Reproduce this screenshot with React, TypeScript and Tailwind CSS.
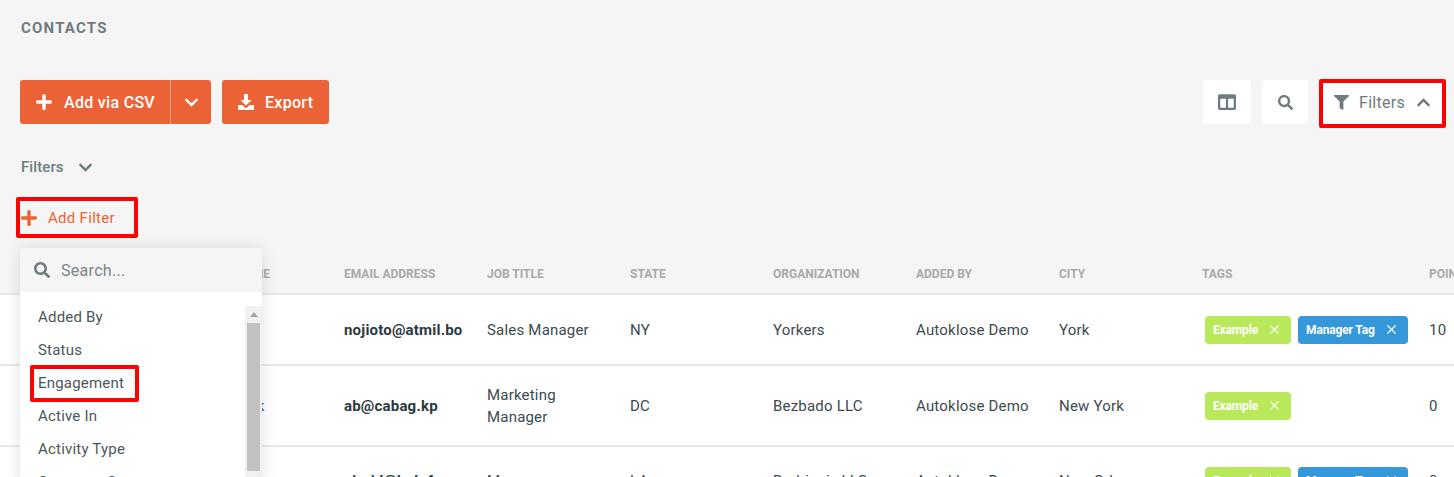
import { FaChevronDown, FaChevronUp, FaColumns, FaFilter, FaPlus, FaSearch } from "react-icons/fa";
import { X } from "lucide-react";

const columns = ["Email Address", "Job Title", "State", "Organization", "Added By", "City"];

const contacts = [
    {
        name: "Jo",
        email: "nojioto@atmil.bo",
        job: "Sales Manager",
        state: "NY",
        org: "Yorkers",
        city: "York",
        tags: ["Example", "Manager Tag"],
        points: "10",
        height: "h-[71px]",
    },
    {
        name: "Nick",
        email: "ab@cabag.kp",
        job: "Marketing Manager",
        state: "DC",
        org: "Bezbado LLC",
        city: "New York",
        tags: ["Example"],
        points: "0",
        height: "h-[81px]",
    },
    {
        name: "",
        email: "ajurid@hub.fm",
        job: "Manager",
        state: "LA",
        org: "Rodriguiz LLC",
        city: "New Orleans",
        tags: ["Example", "Manager Tag"],
        points: "0",
        height: "h-[69px]",
    },
];

const filterOptions = ["Added By", "Status", "Engagement", "Active In", "Activity Type", "Company Group"];

function Tag({ label }: { label: string }) {
    const color = label === "Example" ? "bg-[#b9e85b]" : "bg-[#3498db]";
    return (
        <span className={`flex h-[28px] items-center whitespace-nowrap rounded-[4px] pl-2 pr-[9px] text-[12px] font-bold tracking-[-0.15px] text-white ${color}`}>
            {label}
            <X size={15} strokeWidth={1.8} className="ml-[9px]" />
        </span>
    );
}

function Row({ contact }: { contact: (typeof contacts)[number] }) {
    return (
        <div className={`grid grid-cols-[234px_110px_143px_143px_143px_143px_143px_143px_227px_1fr] items-center border-b-2 border-[#e8e8e8] bg-white text-[15px] tracking-[0.2px] leading-[22px] text-[#3c4a50] ${contact.height}`}>
            <div />
            <div>{contact.name}</div>
            <div className="font-bold text-[#2c3a40]">{contact.email}</div>
            <div className="pr-6">{contact.job}</div>
            <div>{contact.state}</div>
            <div>{contact.org}</div>
            <div>Autoklose Demo</div>
            <div>{contact.city}</div>
            <div className="flex gap-[7px] pl-[3px]">
                {contact.tags.map((tag) => (
                    <Tag key={tag} label={tag} />
                ))}
            </div>
            <div>{contact.points}</div>
        </div>
    );
}

function FilterDropdown() {
    return (
        <div className="absolute left-[20px] top-[248px] h-[240px] w-[242px] overflow-hidden rounded-t-[4px] bg-white shadow-[0_0_16px_rgba(0,0,0,0.12)]">
            <div className="flex h-[44px] items-center bg-[#f5f5f5] pl-[14px]">
                <FaSearch size={16} className="text-[#6f7b7f]" />
                <span className="ml-[11px] pt-[2px] text-[16px] tracking-[0.3px] text-[#7b8589]">Search...</span>
            </div>
            <div className="flex">
                <div className="flex-1 pt-[9px] text-[15px] tracking-[0.2px] text-[#4a575c]">
                    {filterOptions.map((option) => (
                        <div key={option} className="relative flex h-[33px] items-center pl-[18px]">
                            {option}
                            {option === "Engagement" && (
                                <span className="absolute left-[10px] top-[-2px] h-[37px] w-[109px] rounded-[2px] border-4 border-[#ff0000]" />
                            )}
                        </div>
                    ))}
                </div>
                <div className="mt-[14px] flex h-[190px] w-[17px] flex-col items-center bg-[#f1f1f1]">
                    <svg width="8" height="5" viewBox="0 0 8 5" className="mt-[6px] mb-[6px] fill-[#a3a3a3]">
                        <path d="M4 0l4 5H0z" />
                    </svg>
                    <div className="h-[148px] w-[13px] bg-[#c1c1c1]" />
                </div>
            </div>
        </div>
    );
}

export default function App() {
    return (
        <div className="relative h-[477px] overflow-hidden bg-[#f5f5f5] font-['Roboto',sans-serif]">
            <div className="pl-[20px] pr-[8px] pt-[20px]">
                <h1 className="ml-px text-[15px] font-bold leading-4 tracking-[1.2px] text-[#6f7b7f]">CONTACTS</h1>

                <div className="mt-[44px] flex h-[44px] items-start">
                    <div className="flex h-[44px] rounded-[3px] bg-[#ea6235] text-[16px] font-medium tracking-[0.3px] text-white">
                        <button className="flex w-[151px] items-center border-r border-[#f4a185] pl-[15px]">
                            <FaPlus size={18} />
                            <span className="ml-[11px] pt-px">Add via CSV</span>
                        </button>
                        <button className="flex w-[40px] items-center justify-center">
                            <FaChevronDown size={15} />
                        </button>
                    </div>
                    <button className="ml-[11px] flex h-[44px] w-[107px] items-center rounded-[3px] bg-[#ea6235] pl-[16px] text-[16px] font-medium tracking-[0.3px] text-white">
                        <svg width="16" height="16" viewBox="0 0 16 16" className="fill-white">
                            <path d="M6 0h4v6h3.5L8 11.5 2.5 6H6z" />
                            <path d="M0 11h4.5l2.2 2.2a1.8 1.8 0 002.6 0L11.5 11H16v5H0z" />
                        </svg>
                        <span className="ml-[11px] pt-px">Export</span>
                    </button>

                    <button className="ml-auto flex h-[44px] w-[48px] items-center justify-center rounded-[3px] bg-white text-[#6f7b7f]">
                        <FaColumns size={18} />
                    </button>
                    <button className="ml-[11px] flex h-[44px] w-[46px] items-center justify-center rounded-[3px] bg-white text-[#6f7b7f]">
                        <FaSearch size={15} />
                    </button>
                    <button className="-mt-px ml-[11px] flex h-[49px] w-[127px] items-center rounded-[2px] border-4 border-[#ff0000] bg-white pb-[2px] pl-[11px] text-[16px] tracking-[0.3px] text-[#6f7b7f]">
                        <FaFilter size={15} />
                        <span className="ml-[10px]">Filters</span>
                        <FaChevronUp size={15} className="ml-[11px]" />
                    </button>
                </div>

                <div className="ml-px mt-[33px] flex h-[20px] items-center text-[15px] font-medium tracking-[0.1px] text-[#6f7b7f]">
                    Filters
                    <FaChevronDown size={15} className="ml-[14px]" />
                </div>

                <button className="-ml-[4px] mt-[20px] flex h-[41px] w-[122px] items-center rounded-[2px] border-4 border-[#ff0000] text-[15px] tracking-[0.3px] text-[#ea6235]">
                    <FaPlus size={18} />
                    <span className="ml-[10px] pt-px">Add Filter</span>
                </button>
            </div>

            <div className="mt-[17px]">
                <div className="grid h-[40px] grid-cols-[234px_110px_143px_143px_143px_143px_143px_143px_227px_1fr] items-center border-b-2 border-[#e8e8e8] text-[12px] font-bold uppercase text-[#a9a9a9]">
                    <div />
                    <div className="pl-[2px]">Name</div>
                    {columns.map((column) => (
                        <div key={column}>{column}</div>
                    ))}
                    <div>Tags</div>
                    <div className="whitespace-nowrap">Points</div>
                </div>
                {contacts.map((contact) => (
                    <Row key={contact.email} contact={contact} />
                ))}
            </div>

            <FilterDropdown />
        </div>
    );
}
